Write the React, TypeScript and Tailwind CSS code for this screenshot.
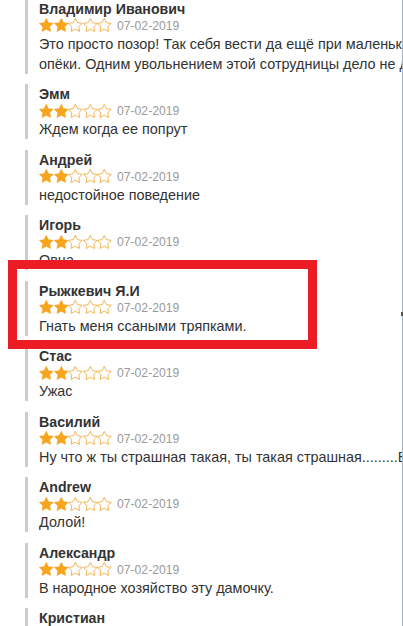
import React from "react";

type Review = { name: string; text: React.ReactNode };

const reviews: Review[] = [
  {
    name: "Владимир Иванович",
    text: (
      <>
        Это просто позор! Так себя вести да ещё при маленьких детях и сотрудниках органов
        <br />
        опёки. Одним увольнением этой сотрудницы дело не должно ограничиться.
      </>
    ),
  },
  { name: "Эмм", text: "Ждем когда ее попрут" },
  { name: "Андрей", text: "недостойное поведение" },
  { name: "Игорь", text: "Овца" },
  { name: "Рыжкевич Я.И", text: "Гнать меня ссаными тряпками." },
  { name: "Стас", text: "Ужас" },
  { name: "Василий", text: "Ну что ж ты страшная такая, ты такая страшная.........Вот" },
  { name: "Andrew", text: "Долой!" },
  { name: "Александр", text: "В народное хозяйство эту дамочку." },
  { name: "Кристиан", text: "Позор" },
];

const STAR = "12,2 15.09,8.26 22,9.27 17,14.14 18.18,21.02 12,17.77 5.82,21.02 7,14.14 2,9.27 8.91,8.26";

function Star({ filled }: { filled: boolean }) {
  return (
    <svg viewBox="1.5 1.5 21 21" className="w-[14.6px] h-[14.5px] shrink-0">
      {filled ? (
        <polygon points={STAR} fill="#f7a51c" stroke="#f39c12" strokeWidth="0.8" strokeLinejoin="round" />
      ) : (
        <polygon points={STAR} fill="none" stroke="#f1b24f" strokeWidth="1.4" strokeLinejoin="round" />
      )}
    </svg>
  );
}

function Stars({ n }: { n: number }) {
  return (
    <div className="flex items-center">
      {[0, 1, 2, 3, 4].map((i) => (
        <Star key={i} filled={i < n} />
      ))}
    </div>
  );
}

export default function App() {
  return (
    <div
      className="relative w-[403px] h-[626px] overflow-hidden bg-white"
      style={{ fontFamily: '"Liberation Sans", Arial, sans-serif' }}
    >
      <div className="h-full overflow-hidden border-r border-[#a9b6c8]">
        <div className="-mt-[1.5px] pl-[25px] flex flex-col gap-[10.5px] w-[700px]">
          {reviews.map((r, i) => (
            <div key={i} className="border-l-[3px] border-[#cccccc] pl-[11px] pt-[2px]">
              <div className="text-[14.2px] leading-[17px] font-bold text-[#333333]">{r.name}</div>
              <div className="flex items-center h-[16px]">
                <Stars n={2} />
                <span className="ml-[5px] text-[12.2px] leading-[16px] text-[#9a9a9a]">07-02-2019</span>
              </div>
              <div className="text-[14.4px] leading-[20px] text-[#333333] whitespace-nowrap">{r.text}</div>
            </div>
          ))}
        </div>
      </div>
      <div className="absolute right-0 top-[312px] w-[2px] h-[4px] bg-[#555555]" />
      <div className="absolute left-[8px] top-[260px] w-[309px] h-[89px] border-[9px] border-[#ec1c24]" />
    </div>
  );
}
